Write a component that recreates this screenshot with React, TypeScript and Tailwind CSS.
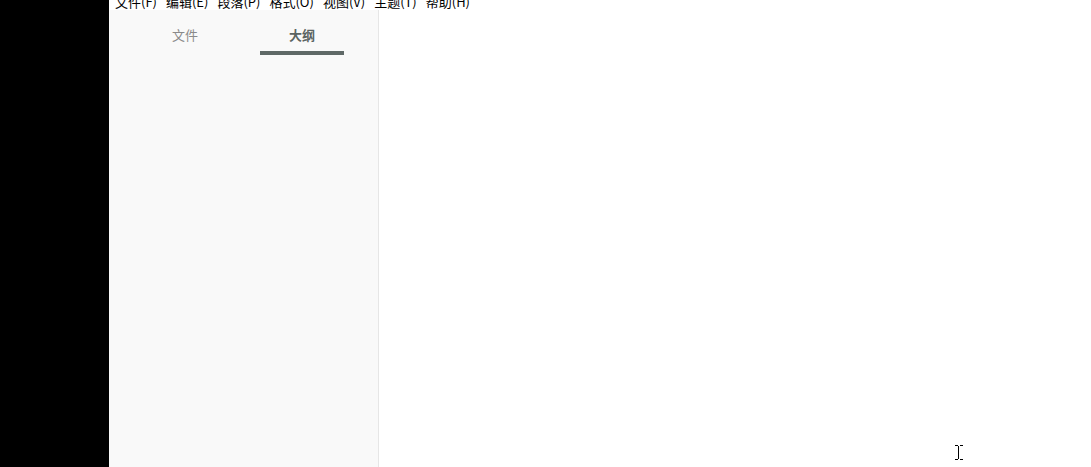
const menus = ["文件(F)", "编辑(E)", "段落(P)", "格式(O)", "视图(V)", "主题(T)", "帮助(H)"];

const App = () => {
  return (
    <div
      className="relative flex h-[467px] w-[1091px] overflow-hidden bg-white"
      style={{ fontFamily: '"Noto Sans CJK SC", "Liberation Sans", sans-serif' }}
    >
      <div className="w-[109px] shrink-0 bg-black" />
      <div className="flex flex-1 flex-col">
        <div className="h-[10px] shrink-0 overflow-hidden bg-white">
          <div className="mt-[-5px] flex gap-[9px] pl-[6px] text-[13px] leading-[13px] text-black">
            {menus.map((m) => (
              <span key={m} className="whitespace-nowrap">
                {m}
              </span>
            ))}
          </div>
        </div>
        <div className="flex flex-1">
          <div className="w-[270px] shrink-0 border-r border-[#e6e6e6] bg-[#f9f9f9]">
            <div className="flex justify-center gap-[33px] pt-[17px]">
              <div className="flex w-[84px] flex-col items-center">
                <span className="text-[13px] leading-[16px] text-[#8a8a8a]">文件</span>
                <div className="mt-[8px] h-[4px] w-full" />
              </div>
              <div className="flex w-[84px] flex-col items-center">
                <span className="text-[13px] font-bold leading-[16px] text-[#5b6462]">大纲</span>
                <div className="mt-[8px] h-[4px] w-full bg-[#5f6967]" />
              </div>
            </div>
          </div>
          <div className="flex-1 bg-white" />
        </div>
      </div>
      <svg
        className="absolute left-[954px] top-[444px]"
        width="10"
        height="17"
        viewBox="0 0 10 17"
      >
        <path d="M1 1.5h3M6 1.5h3M4.5 2v13M1 15.5h3M6 15.5h3" stroke="#000" strokeWidth="1" fill="none" />
      </svg>
    </div>
  );
};

export default App;
